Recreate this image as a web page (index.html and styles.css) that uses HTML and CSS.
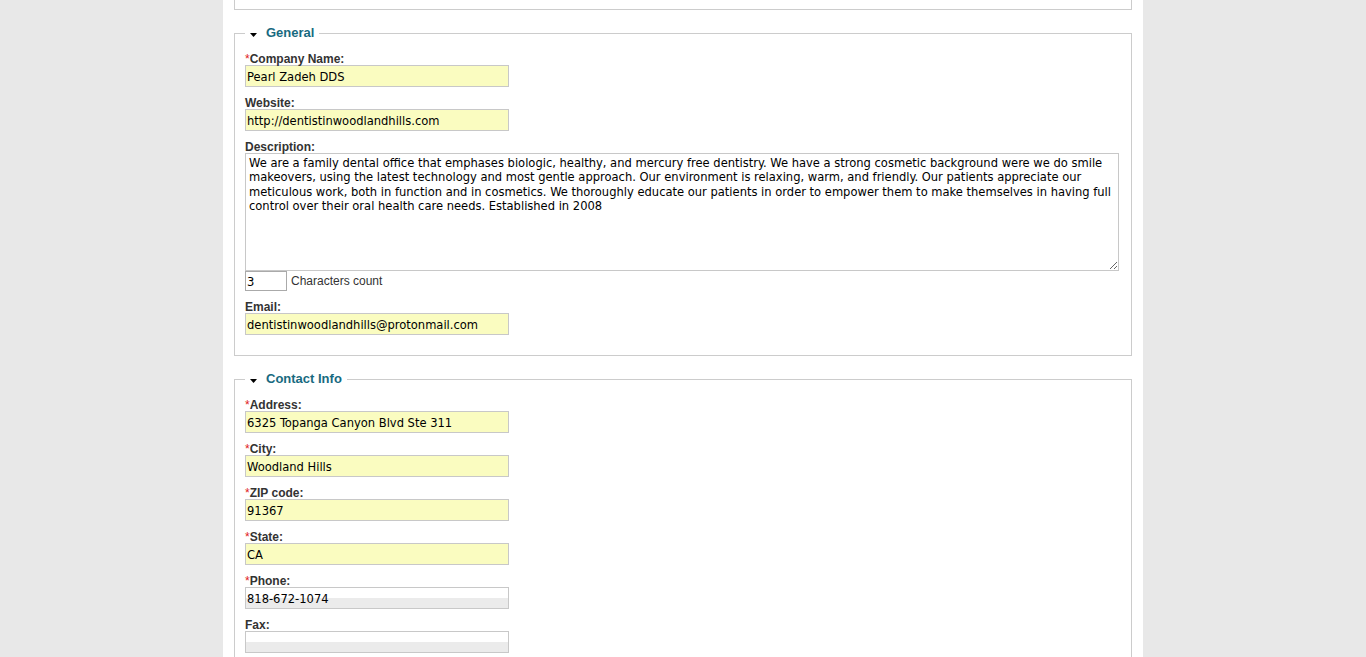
FILE: index.html
```html
<!DOCTYPE html>
<html lang="en">
<head>
    <meta charset="UTF-8">
    <meta name="viewport" content="width=device-width, initial-scale=1.0">
    <title>Edit Listing</title>
    <link rel="stylesheet" href="styles.css">
</head>
<body>
    <div class="page">
        <fieldset class="section section-prev"></fieldset>

        <fieldset class="section">
            <legend><svg class="toggle" width="7" height="4" viewBox="0 0 7 4"><path d="M0 0H7L3.5 4Z" fill="#000"/></svg>General</legend>

            <div class="field">
                <label for="company"><span class="req">*</span>Company Name:</label>
                <input type="text" id="company" class="required" value="Pearl Zadeh DDS">
            </div>

            <div class="field">
                <label for="website">Website:</label>
                <input type="text" id="website" class="required" value="http://dentistinwoodlandhills.com">
            </div>

            <div class="field">
                <label for="description">Description:</label>
                <textarea id="description">We are a family dental office that emphases biologic, healthy, and mercury free dentistry. We have a strong cosmetic background were we do smile makeovers, using the latest technology and most gentle approach. Our environment is relaxing, warm, and friendly. Our patients appreciate our meticulous work, both in function and in cosmetics. We thoroughly educate our patients in order to empower them to make themselves in having full control over their oral health care needs. Established in 2008</textarea>
                <div class="counter">
                    <input type="text" id="charcount" value="3">
                    <span>Characters count</span>
                </div>
            </div>

            <div class="field">
                <label for="email">Email:</label>
                <input type="text" id="email" class="required" value="dentistinwoodlandhills@protonmail.com">
            </div>
        </fieldset>

        <fieldset class="section">
            <legend><svg class="toggle" width="7" height="4" viewBox="0 0 7 4"><path d="M0 0H7L3.5 4Z" fill="#000"/></svg>Contact Info</legend>

            <div class="field">
                <label for="address"><span class="req">*</span>Address:</label>
                <input type="text" id="address" class="required" value="6325 Topanga Canyon Blvd Ste 311">
            </div>

            <div class="field">
                <label for="city"><span class="req">*</span>City:</label>
                <input type="text" id="city" class="required" value="Woodland Hills">
            </div>

            <div class="field">
                <label for="zip"><span class="req">*</span>ZIP code:</label>
                <input type="text" id="zip" class="required" value="91367">
            </div>

            <div class="field">
                <label for="state"><span class="req">*</span>State:</label>
                <input type="text" id="state" class="required" value="CA">
            </div>

            <div class="field">
                <label for="phone"><span class="req">*</span>Phone:</label>
                <input type="text" id="phone" class="plain" value="818-672-1074">
            </div>

            <div class="field">
                <label for="fax">Fax:</label>
                <input type="text" id="fax" class="plain" value="">
            </div>
        </fieldset>
    </div>
</body>
</html>
```

FILE: styles.css
```css
body {
    margin: 0;
    background-color: #e8e8e8;
    font-family: "Liberation Sans", Arial, sans-serif;
    font-size: 12px;
    color: #333;
}
.page {
    width: 898px;
    margin: 0 auto;
    padding: 0 11px 40px;
    background: #fff;
}
.section {
    margin: 15px 0 0;
    padding: 9px 10px 20px;
    border: 1px solid #ccc;
    min-inline-size: 0;
}
.section-prev {
    margin-top: -50px;
    height: 58px;
    padding: 0;
}
.section legend {
    padding: 0 5px;
    line-height: 16px;
    font-size: 13px;
    font-weight: bold;
    color: #186a80;
}
.toggle {
    margin-right: 9px;
    vertical-align: baseline;
}
.field {
    margin-bottom: 7px;
}
.field:last-child {
    margin-bottom: 0;
}
.field label {
    display: block;
    padding-top: 4px;
    line-height: 11px;
    font-weight: bold;
}
.req {
    color: #e02020;
    font-weight: normal;
}
.field input,
.field textarea {
    box-sizing: border-box;
    margin: 0;
    border: 1px solid #c8c8c8;
    font-family: "DejaVu Sans Condensed", "DejaVu Sans", sans-serif;
    font-size: 12.8px;
    color: #000;
    outline: none;
}
.field input {
    display: block;
    width: 264px;
    height: 22px;
    padding: 0 1px;
}
input.required {
    background-color: #fafcc0;
}
input.plain {
    background: linear-gradient(#fff 50%, #ebebeb 50%);
}
.field textarea {
    display: block;
    width: 874px;
    height: 118px;
    padding: 2px 3px;
    line-height: 14.4px;
    resize: vertical;
}
.counter {
    display: flex;
    align-items: center;
    gap: 4px;
}
.counter input {
    width: 42px;
    height: 20px;
    border-color: #aaa;
    background: #fff;
}
```
